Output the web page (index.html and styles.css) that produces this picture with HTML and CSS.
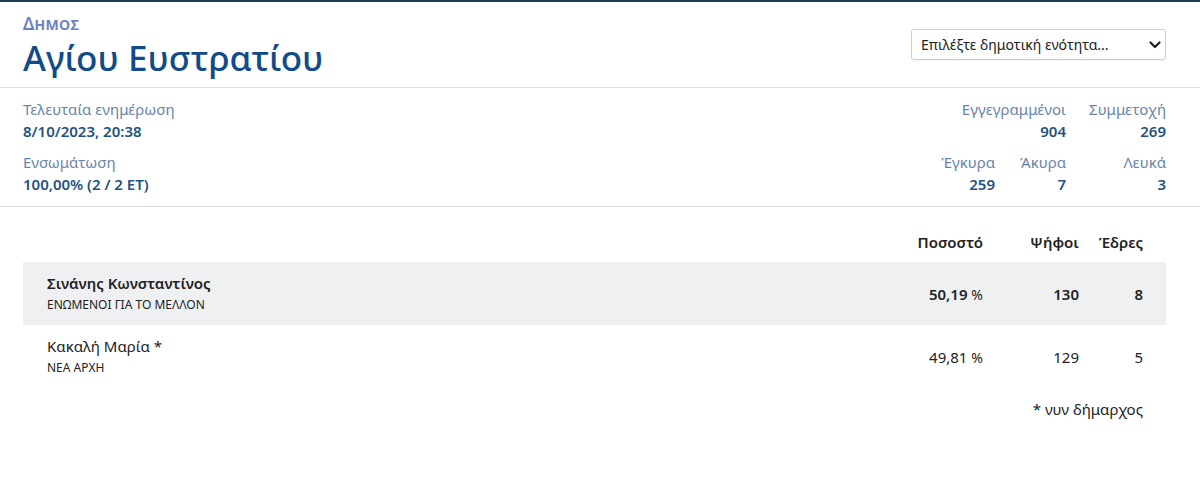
FILE: index.html
```html
<!DOCTYPE html>
<html lang="el">

<head>
    <meta charset="UTF-8">
    <meta name="viewport" content="width=device-width, initial-scale=1.0">
    <title>Δήμος Αγίου Ευστρατίου</title>
    <link rel="stylesheet" href="styles.css">
</head>

<body>
    <div class="topbar"></div>

    <div class="head">
        <div class="title">
            <div class="kind">Δημος</div>
            <h1>Αγίου Ευστρατίου</h1>
        </div>
        <div class="pick">
            <select>
                <option>Επιλέξτε δημοτική ενότητα...</option>
            </select>
            <svg class="chev" width="12" height="8" viewBox="0 0 12 8">
                <path d="M1.5 1.5 L6 6 L10.5 1.5" fill="none" stroke="#222" stroke-width="2.2" stroke-linecap="round" stroke-linejoin="round"/>
            </svg>
        </div>
    </div>

    <div class="info">
        <div class="left">
            <div class="item">
                <div class="lbl">Τελευταία ενημέρωση</div>
                <div class="val">8/10/2023, 20:38</div>
            </div>
            <div class="item">
                <div class="lbl">Ενσωμάτωση</div>
                <div class="val">100,00% (2 / 2 ΕΤ)</div>
            </div>
        </div>
        <div class="right">
            <div class="row">
                <div class="item">
                    <div class="lbl">Εγγεγραμμένοι</div>
                    <div class="val">904</div>
                </div>
                <div class="item wide">
                    <div class="lbl">Συμμετοχή</div>
                    <div class="val">269</div>
                </div>
            </div>
            <div class="row">
                <div class="item narrow">
                    <div class="lbl">Έγκυρα</div>
                    <div class="val">259</div>
                </div>
                <div class="item narrow">
                    <div class="lbl">Άκυρα</div>
                    <div class="val">7</div>
                </div>
                <div class="item wide">
                    <div class="lbl">Λευκά</div>
                    <div class="val">3</div>
                </div>
            </div>
        </div>
    </div>

    <div class="results">
        <div class="line th">
            <div class="name"></div>
            <div class="pct">Ποσοστό</div>
            <div class="votes">Ψήφοι</div>
            <div class="seats">Έδρες</div>
        </div>
        <div class="line cand winner">
            <div class="name">
                <div class="who">Σινάνης Κωνσταντίνος</div>
                <div class="party">ΕΝΩΜΕΝΟΙ ΓΙΑ ΤΟ ΜΕΛΛΟΝ</div>
            </div>
            <div class="pct">50,19 <span>%</span></div>
            <div class="votes">130</div>
            <div class="seats">8</div>
        </div>
        <div class="line cand">
            <div class="name">
                <div class="who">Κακαλή Μαρία *</div>
                <div class="party">ΝΕΑ ΑΡΧΗ</div>
            </div>
            <div class="pct">49,81 <span>%</span></div>
            <div class="votes">129</div>
            <div class="seats">5</div>
        </div>
        <div class="note">* νυν δήμαρχος</div>
    </div>
</body>

</html>
```

FILE: styles.css
```css
* {
    margin: 0;
    padding: 0;
    box-sizing: border-box;
}

body {
    font-family: "Noto Sans", "Open Sans", sans-serif;
    color: #222;
    background: #fff;
}

.topbar {
    height: 2px;
    background: #1e3f5c;
}

.head {
    display: flex;
    justify-content: space-between;
    align-items: flex-start;
    padding: 12px 34px 0 23px;
    height: 86px;
    border-bottom: 1px solid #dedede;
}

.kind {
    font-size: 17px;
    font-variant: small-caps;
    font-weight: 600;
    color: #6a82c2;
    line-height: 20px;
    letter-spacing: 0.3px;
    margin-bottom: 4px;
}

h1 {
    font-size: 35px;
    font-weight: 500;
    color: #124b88;
    line-height: 40px;
}

.pick {
    position: relative;
    margin-top: 15px;
}

.pick select {
    appearance: none;
    -webkit-appearance: none;
    width: 255px;
    height: 31px;
    border: 1px solid #cfcfcf;
    border-radius: 3px;
    background: #fff;
    font-family: inherit;
    font-size: 14px;
    color: #222;
    padding: 0 0 1px 9px;
    box-shadow: 0 1px 2px rgba(0, 0, 0, 0.06);
}

.pick .chev {
    position: absolute;
    right: 5px;
    top: 12px;
}

.info {
    display: flex;
    justify-content: space-between;
    padding: 10px 34px 2px 23px;
    border-bottom: 1px solid #dedede;
}

.item {
    margin-bottom: 9px;
}

.lbl {
    font-size: 15px;
    color: #6a84a9;
    line-height: 22px;
}

.val {
    font-size: 15px;
    font-weight: 600;
    color: #24527f;
    line-height: 22px;
}

.right .row {
    display: flex;
    justify-content: flex-end;
}

.right .item {
    text-align: right;
}

.right .wide {
    width: 100px;
}

.right .narrow {
    width: 71px;
}

.results {
    padding: 14px 34px 0 23px;
}

.line {
    display: flex;
    align-items: center;
    padding: 0 23px 0 24px;
}

.line .name {
    flex: 1;
}

.line .pct {
    width: 120px;
    text-align: right;
}

.line .votes {
    width: 96px;
    text-align: right;
}

.line .seats {
    width: 64px;
    text-align: right;
}

.th {
    height: 41px;
    font-size: 15px;
    font-weight: 600;
    color: #222;
}

.cand {
    height: 63px;
    font-size: 15px;
}

.winner {
    background: #eef0f2;
    font-weight: 600;
}

.cand .pct span {
    font-weight: 400;
    font-size: 14px;
}

.who {
    line-height: 22px;
}

.party {
    font-size: 12px;
    font-weight: 400;
    line-height: 22px;
    color: #222;
}

.cand:not(.winner) .who {
    font-weight: 400;
}

.note {
    text-align: right;
    padding: 11px 23px 0 0;
    font-size: 15px;
    color: #222;
}
```
